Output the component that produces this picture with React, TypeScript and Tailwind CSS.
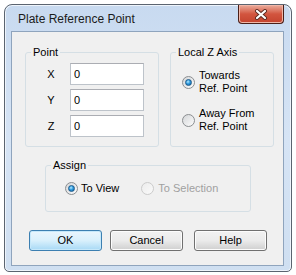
import React from "react";

function Radio({ checked, disabled }: { checked?: boolean; disabled?: boolean }) {
  return (
    <span
      className={
        disabled
          ? "flex h-[13px] w-[13px] shrink-0 items-center justify-center rounded-full border border-[#cbcbcb] bg-linear-to-br from-[#ececec] to-[#fafafa]"
          : "flex h-[13px] w-[13px] shrink-0 items-center justify-center rounded-full border border-[#8b8e91] bg-linear-to-br from-[#d4d6d8] to-[#fdfdfd]"
      }
    >
      {checked && (
        <span className="h-[7px] w-[7px] rounded-full border border-[#1c5b8c] bg-[radial-gradient(circle_at_40%_35%,#b6ecff_0%,#2f9be0_45%,#0b5a96_100%)]" />
      )}
    </span>
  );
}

function Field({ label }: { label: string }) {
  return (
    <div className="flex h-[22px] items-center">
      <span className="ml-[19px] w-[12px] text-center">{label}</span>
      <input
        readOnly
        value="0"
        className="ml-[13px] h-[22px] w-[74px] border border-[#bdc3ca] border-t-[#abadb3] bg-white pl-[3px] text-[11px] outline-none"
      />
    </div>
  );
}

function Button({ label, primary, className }: { label: string; primary?: boolean; className?: string }) {
  return (
    <button
      className={`${className ?? ""} flex h-[21px] w-[73px] items-center justify-center rounded-[3px] border text-[11px] ${
        primary
          ? "border-[#3c7fb1] bg-linear-to-b from-[#eaf6fd] via-[#d9f0fc] to-[#a7d9f5] shadow-[inset_0_0_0_1px_#c6e8fa]"
          : "border-[#707070] bg-linear-to-b from-[#f2f2f2] via-[#ebebeb] to-[#cfcfcf] shadow-[inset_0_0_0_1px_#fcfcfc]"
      }`}
    >
      {label}
    </button>
  );
}

export default function App() {
  return (
    <div className="h-[275px] w-[296px] overflow-hidden bg-white pl-[4px] pt-[4px] text-[11px] text-black [font-family:'Liberation_Sans',Arial,sans-serif]">
      {/* window frame */}
      <div className="flex h-[268px] w-[288px] flex-col rounded-t-[8px] rounded-b-[5px] border border-[#5b6470] bg-linear-to-b from-[#c8daf0] via-[#d6e4f5] to-[#cfdff1] pl-[6px] pr-[7px] shadow-[inset_0_0_0_1px_#eef4fb]">
        <div className="flex h-[26px] shrink-0 items-start justify-between">
          <span className="pl-[7px] pt-[7px] text-[12px] leading-[15px] text-[#1b1b1b]">Plate Reference Point</span>
          <div className="flex h-[19px] w-[46px] items-center justify-center rounded-b-[4px] border border-t-0 border-[#4a1f18] bg-linear-to-b from-[#e9ac9d] via-[#d2553f] to-[#c4432e] shadow-[inset_0_0_0_1px_#f0b7a8]">
            <svg width="14" height="11" viewBox="0 0 14 11">
              <path d="M3 2 L11 9 M11 2 L3 9" stroke="#5a2a22" strokeWidth="4" strokeLinecap="round" />
              <path d="M3 2 L11 9 M11 2 L3 9" stroke="#ffffff" strokeWidth="2.2" strokeLinecap="round" />
            </svg>
          </div>
        </div>

        {/* client area */}
        <div className="flex h-[235px] w-[273px] shrink-0 flex-col border border-[#8fa4bd] bg-[#f0f0f0]">
          <div className="ml-[13px] mt-[14px] flex">
            <fieldset className="h-[101px] w-[134px] rounded-[3px] border border-[#d5dfe5]">
              <legend className="ml-[5px] px-[2px] leading-[13px]">Point</legend>
              <div className="flex flex-col gap-[4px] pt-[4px]">
                <Field label="X" />
                <Field label="Y" />
                <Field label="Z" />
              </div>
            </fieldset>
            <fieldset className="ml-[11px] h-[101px] w-[104px] rounded-[3px] border border-[#d5dfe5]">
              <legend className="ml-[5px] px-[2px] leading-[13px]">Local Z Axis</legend>
              <div className="flex flex-col gap-[12px] pl-[11px] pt-[10px]">
                <div className="flex items-center gap-[4px]">
                  <Radio checked />
                  <span className="leading-[13px]">
                    Towards
                    <br />
                    Ref. Point
                  </span>
                </div>
                <div className="flex items-center gap-[4px]">
                  <Radio />
                  <span className="leading-[13px]">
                    Away From
                    <br />
                    Ref. Point
                  </span>
                </div>
              </div>
            </fieldset>
          </div>

          <fieldset className="ml-[33px] mt-[12px] h-[53px] w-[206px] rounded-[3px] border border-[#d5dfe5]">
            <legend className="ml-[5px] px-[2px] leading-[13px]">Assign</legend>
            <div className="flex items-center pl-[19px] pt-[10px]">
              <Radio checked />
              <span className="ml-[3px] leading-[13px]">To View</span>
              <span className="ml-[22px]">
                <Radio disabled />
              </span>
              <span className="ml-[4px] leading-[13px] text-[#a0a0a0]">To Selection</span>
            </div>
          </fieldset>

          <div className="ml-[17px] mt-[18px] flex">
            <Button label="OK" primary />
            <Button label="Cancel" className="ml-[8px]" />
            <Button label="Help" className="ml-[11px]" />
          </div>
        </div>
      </div>
    </div>
  );
}
